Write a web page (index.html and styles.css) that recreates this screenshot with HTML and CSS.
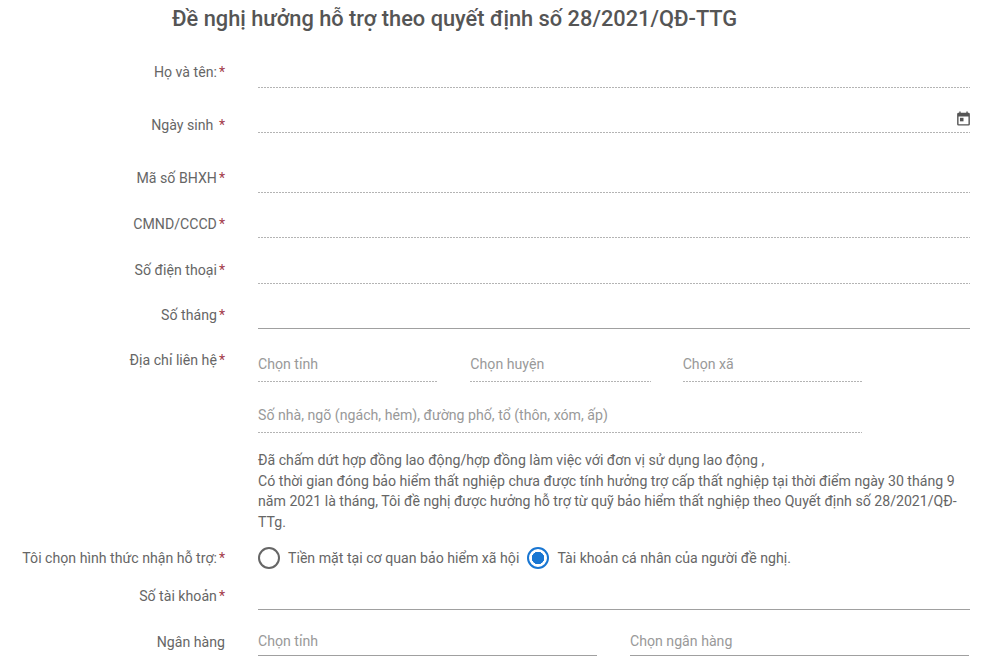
FILE: index.html
```html
<!DOCTYPE html>
<html lang="en">
<head>
    <title>Đề nghị hưởng hỗ trợ</title>
    <link rel="stylesheet" href="styles.css">
</head>
<body>
    <h1 class="title">Đề nghị hưởng hỗ trợ theo quyết định số 28/2021/QĐ-TTG</h1>
    <form class="form">
        <div class="row row-1">
            <label class="label">Họ và tên:<span class="req">*</span></label>
            <div class="field"><input class="input" type="text"></div>
        </div>
        <div class="row row-2">
            <label class="label label-date">Ngày sinh&nbsp;<span class="req">*</span></label>
            <div class="field">
                <input class="input" type="text">
                <svg class="date-icon" viewBox="0 0 24 24" width="17" height="17">
                    <path fill="#555" d="M19 4h-1V2h-2v2H8V2H6v2H5a2 2 0 0 0-2 2v14a2 2 0 0 0 2 2h14a2 2 0 0 0 2-2V6a2 2 0 0 0-2-2zm0 16H5V9h14v11z"/>
                    <path fill="#555" d="M7 11h5v5H7z"/>
                </svg>
            </div>
        </div>
        <div class="row row-3">
            <label class="label">Mã số BHXH<span class="req">*</span></label>
            <div class="field"><input class="input" type="text"></div>
        </div>
        <div class="row row-4">
            <label class="label">CMND/CCCD<span class="req">*</span></label>
            <div class="field"><input class="input" type="text"></div>
        </div>
        <div class="row row-5">
            <label class="label">Số điện thoại<span class="req">*</span></label>
            <div class="field"><input class="input" type="text"></div>
        </div>
        <div class="row row-6">
            <label class="label">Số tháng<span class="req">*</span></label>
            <div class="field field-solid"><input class="input" type="text"></div>
        </div>
        <div class="row row-address">
            <label class="label">Địa chỉ liên hệ<span class="req">*</span></label>
            <div class="address">
                <div class="address-selects">
                    <div class="field"><input class="input" type="text" placeholder="Chọn tỉnh"></div>
                    <div class="field"><input class="input" type="text" placeholder="Chọn huyện"></div>
                    <div class="field"><input class="input" type="text" placeholder="Chọn xã"></div>
                </div>
                <div class="field field-street"><input class="input" type="text" placeholder="Số nhà, ngõ (ngách, hẻm), đường phố, tổ (thôn, xóm, ấp)"></div>
                <p class="note">Đã chấm dứt hợp đồng lao động/hợp đồng làm việc với đơn vị sử dụng lao động ,<br>Có thời gian đóng bảo hiểm thất nghiệp chưa được tính hưởng trợ cấp thất nghiệp tại thời điểm ngày 30 tháng 9 năm 2021 là tháng, Tôi đề nghị được hưởng hỗ trợ từ quỹ bảo hiểm thất nghiệp theo Quyết định số 28/2021/QĐ-TTg.</p>
            </div>
        </div>
        <div class="row row-radio">
            <label class="label">Tôi chọn hình thức nhận hỗ trợ:<span class="req">*</span></label>
            <div class="radios">
                <span class="radio"></span>
                <span class="radio-text">Tiền mặt tại cơ quan bảo hiểm xã hội</span>
                <span class="radio radio-on"></span>
                <span class="radio-text">Tài khoản cá nhân của người đề nghị.</span>
            </div>
        </div>
        <div class="row row-account">
            <label class="label">Số tài khoản<span class="req">*</span></label>
            <div class="field field-solid"><input class="input" type="text"></div>
        </div>
        <div class="row row-bank">
            <label class="label">Ngân hàng</label>
            <div class="bank">
                <div class="field field-solid"><input class="input" type="text" placeholder="Chọn tỉnh"></div>
                <div class="field field-solid"><input class="input" type="text" placeholder="Chọn ngân hàng"></div>
            </div>
        </div>
    </form>
</body>
</html>
```

FILE: styles.css
```css
body {
    margin: 0;
    background-color: white;
    color: #666;
    font-family: Roboto, "Liberation Sans", sans-serif;
    font-size: 14.15px;
    overflow: hidden;
}

.title {
    margin: 0 0 20px 172px;
    font-size: 21.8px;
    font-weight: 500;
    line-height: 38px;
    color: #555;
}

.form {
    width: 970px;
}

.row {
    display: flex;
    align-items: flex-end;
    gap: 33px;
}

.row-2 { margin-top: 15px; }
.row-3 { margin-top: 30px; }
.row-4 { margin-top: 15px; }
.row-5 { margin-top: 16px; }
.row-6 { margin-top: 15px; }

.label {
    flex: 0 0 225px;
    padding-bottom: 6px;
    line-height: 20px;
    text-align: right;
}

.row-3 .label { padding-bottom: 5px; }
.row-4 .label,
.row-5 .label,
.row-6 .label { padding-bottom: 4px; }

.label-date {
    margin-bottom: -2px;
    padding-bottom: 0;
}

.req {
    margin-left: 2px;
    color: #a33a4a;
}

.field {
    flex: 1;
    display: flex;
    align-items: center;
    position: relative;
    height: 30px;
    padding-bottom: 1px;
    box-sizing: border-box;
    background: repeating-linear-gradient(to right, #b4b4b4 0 2px, transparent 2px 3px) left bottom / 100% 1px no-repeat;
}

.field-solid {
    background: linear-gradient(#a0a0a0, #a0a0a0) left bottom / 100% 1px no-repeat;
}

.input {
    flex: 1;
    min-width: 0;
    padding: 0;
    border: none;
    outline: none;
    background: none;
    font-family: inherit;
    font-size: 14.15px;
    color: #666;
}

.input::placeholder {
    color: #999;
    opacity: 1;
}

.date-icon {
    position: absolute;
    right: -2px;
    top: 7px;
}

.row-address {
    align-items: flex-start;
    margin-top: 21px;
}

.row-address .label {
    padding-bottom: 0;
}

.address {
    flex: 1;
}

.address-selects {
    display: flex;
    gap: 32px;
    width: 605px;
    padding-top: 2px;
}

.address-selects .field {
    padding-bottom: 7px;
}

.field-street {
    width: 604px;
    margin-top: 21px;
    padding-bottom: 7px;
}

.note {
    margin: 17px 0 0;
    line-height: 20.7px;
}

.row-radio {
    align-items: center;
    margin-top: 14px;
}

.row-radio .label {
    padding-bottom: 0;
}

.radios {
    display: flex;
    align-items: center;
}

.radio {
    flex: none;
    width: 22px;
    height: 22px;
    box-sizing: border-box;
    border: 2px solid #666;
    border-radius: 50%;
}

.radio-on {
    border-color: #1976d2;
    background: radial-gradient(circle, #1976d2 0 6px, white 6.5px);
}

.radio-text {
    margin: 0 8px;
}

.row-account {
    margin-top: 11px;
}

.row-account .label {
    padding-bottom: 4px;
}

.row-bank {
    margin-top: 16px;
}

.row-bank .label {
    padding-bottom: 4px;
}

.row-bank .field {
    padding-bottom: 0;
}

.bank {
    flex: 1;
    display: flex;
    gap: 33px;
    margin-right: 1px;
}
```
